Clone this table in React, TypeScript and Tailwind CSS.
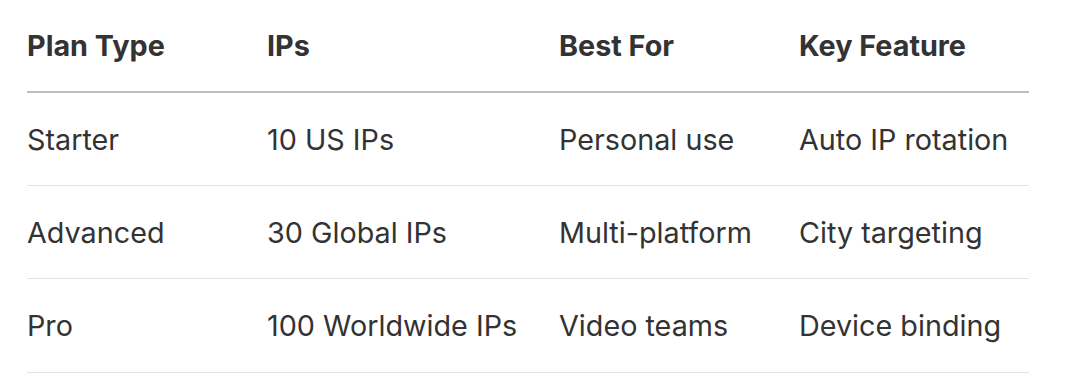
import React from "react";

const rows = [
  ["Starter", "10 US IPs", "Personal use", "Auto IP rotation"],
  ["Advanced", "30 Global IPs", "Multi-platform", "City targeting"],
  ["Pro", "100 Worldwide IPs", "Video teams", "Device binding"],
];

const cols = "grid grid-cols-[240px_292px_240px_230px]";

export default function App() {
  return (
    <div className="w-[1066px] h-[388px] bg-white text-[#333333] font-['Inter',sans-serif] text-[28.75px] leading-[34px]">
      <div className="ml-[27px] w-[1002px]">
        <div className={`${cols} h-[93px] items-center border-b-2 border-[#bdbdbd] font-bold pt-[1px]`}>
          <div>Plan Type</div>
          <div>IPs</div>
          <div>Best For</div>
          <div>Key Feature</div>
        </div>
        {rows.map((r, i) => (
          <div
            key={r[0]}
            className={`${cols} ${i === 2 ? "h-[94px]" : "h-[93px]"} items-center border-b border-[#e3e3e3] pt-[1px]`}
          >
            {r.map((c) => (
              <div key={c} className="whitespace-nowrap">{c}</div>
            ))}
          </div>
        ))}
      </div>
    </div>
  );
}
